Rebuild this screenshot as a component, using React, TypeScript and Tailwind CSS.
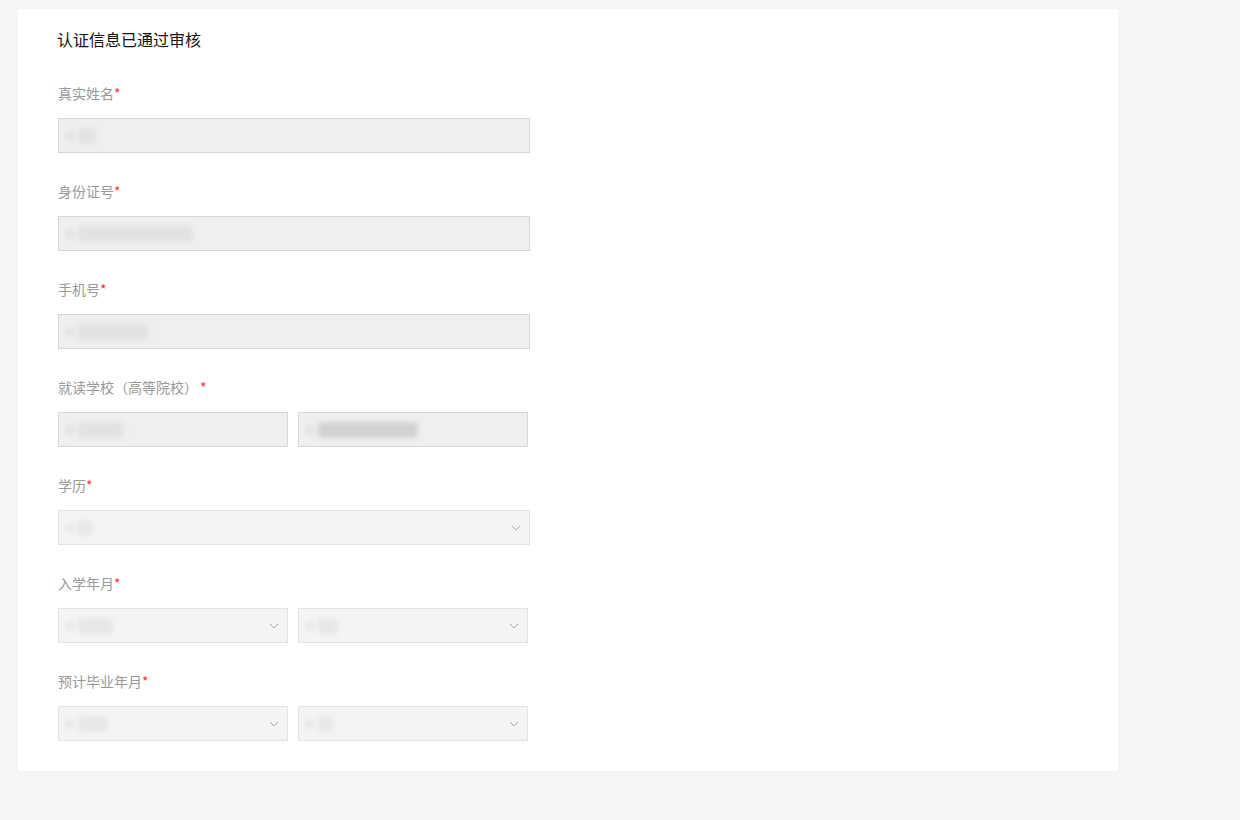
import { ReactNode } from "react";

const font = { fontFamily: '"Noto Sans CJK SC", "Noto Sans", sans-serif' };

function Label({ text, spaced }: { text: string; spaced?: boolean }) {
  return (
    <div className="h-5 text-sm leading-5 text-[#999]">
      {text}
      <span className={"text-[#f33] " + (spaced ? "ml-0.5" : "")}>*</span>
    </div>
  );
}

// blurred placeholder for masked values
function Smudge({ w, dark }: { w: number; dark?: boolean }) {
  return (
    <div className="flex items-center gap-[3px] blur-[2.5px]">
      <div className="h-[8px] w-[10px] rounded-full bg-[#e0e0e0]" />
      <div
        className={"h-[16px] rounded-sm " + (dark ? "bg-[#d2d2d2]" : "bg-[#e2e2e2]")}
        style={{ width: w }}
      />
    </div>
  );
}

function TextBox({ children, full }: { children?: ReactNode; full?: boolean }) {
  return (
    <div
      className={
        "flex h-[35px] items-center border border-[#d6d6d6] bg-[#eeeff1] px-1.5 " +
        (full ? "w-[472px]" : "w-[230px]")
      }
    >
      {children}
    </div>
  );
}

function Chevron() {
  return (
    <svg width="10" height="6" viewBox="0 0 10 6" fill="none">
      <path d="M1 1l4 4 4-4" stroke="#aaa" strokeWidth="1" />
    </svg>
  );
}

function SelectBox({ children, full }: { children?: ReactNode; full?: boolean }) {
  return (
    <div
      className={
        "flex h-[35px] items-center justify-between border border-[#e2e3e5] bg-[#f3f4f5] pl-1.5 pr-2 " +
        (full ? "w-[472px]" : "w-[230px]")
      }
    >
      <div className="opacity-70">{children}</div>
      <Chevron />
    </div>
  );
}

function Field({ label, spaced, children }: { label: string; spaced?: boolean; children: ReactNode }) {
  return (
    <div className="flex flex-col gap-[15px]">
      <Label text={label} spaced={spaced} />
      {children}
    </div>
  );
}

export default function App() {
  return (
    <div className="min-h-[820px] bg-[#f4f5f5] pt-[9px] pl-[18px]" style={font}>
      <div className="w-[1100px] bg-white pl-10 pt-[18px] pb-[30px]">
        <h1 className="-ml-px text-base leading-6 text-[#111]">认证信息已通过审核</h1>
        <div className="mt-[32px] flex flex-col gap-[28px]">
          <Field label="真实姓名">
            <TextBox full>
              <Smudge w={18} />
            </TextBox>
          </Field>
          <Field label="身份证号">
            <TextBox full>
              <Smudge w={115} />
            </TextBox>
          </Field>
          <Field label="手机号">
            <TextBox full>
              <Smudge w={70} />
            </TextBox>
          </Field>
          <Field label="就读学校（高等院校）" spaced>
            <div className="flex gap-[10px]">
              <TextBox>
                <Smudge w={45} />
              </TextBox>
              <TextBox>
                <Smudge w={100} dark />
              </TextBox>
            </div>
          </Field>
          <Field label="学历">
            <SelectBox full>
              <Smudge w={14} />
            </SelectBox>
          </Field>
          <Field label="入学年月">
            <div className="flex gap-[10px]">
              <SelectBox>
                <Smudge w={35} />
              </SelectBox>
              <SelectBox>
                <Smudge w={20} />
              </SelectBox>
            </div>
          </Field>
          <Field label="预计毕业年月">
            <div className="flex gap-[10px]">
              <SelectBox>
                <Smudge w={30} />
              </SelectBox>
              <SelectBox>
                <Smudge w={15} />
              </SelectBox>
            </div>
          </Field>
        </div>
      </div>
    </div>
  );
}
